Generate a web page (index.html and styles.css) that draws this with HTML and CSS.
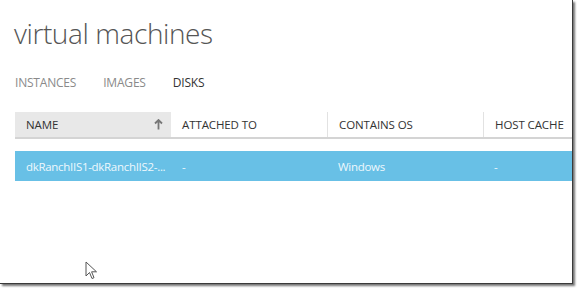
FILE: index.html
```html
<!DOCTYPE html>
<html>
<head>
<meta charset="utf-8">
<link rel="stylesheet" href="styles.css">
</head>
<body>
<div class="frame">
  <h1 class="title">virtual machines</h1>
  <nav class="tabs">
    <span class="tab">INSTANCES</span>
    <span class="tab">IMAGES</span>
    <span class="tab active">DISKS</span>
  </nav>
  <div class="grid">
    <div class="head">
      <div class="hcell sorted"><span>NAME</span>
        <svg class="arrow" width="9" height="11" viewBox="0 0 9 11"><path d="M4.5 1 L4.5 10.5 M1 4.5 L4.5 1 L8 4.5" fill="none" stroke="#777" stroke-width="1.8"/></svg>
      </div>
      <div class="hcell">ATTACHED TO</div>
      <div class="hcell">CONTAINS OS</div>
      <div class="hcell">HOST CACHE</div>
    </div>
    <div class="row selected">
      <div class="cell">dkRanchIIS1-dkRanchIIS2-...</div>
      <div class="cell">-</div>
      <div class="cell">Windows</div>
      <div class="cell">-</div>
    </div>
  </div>
  <svg class="cursor" width="13" height="19" viewBox="0 0 13 19"><path d="M1 1 L1 15 L4.5 11.5 L7 17.5 L9 16.7 L6.6 10.8 L11.5 10.8 Z" fill="#fff" stroke="#555" stroke-width="1" stroke-linejoin="round"/></svg>
</div>
</body>
</html>
```
FILE: styles.css
```css
html, body { margin: 0; padding: 0; background: #fff; }
body { width: 577px; height: 288px; overflow: hidden; }
.frame {
  position: relative;
  width: 572px;
  height: 283px;
  background: #fff;
  border-right: 1px solid #3a3a3a;
  border-bottom: 1px solid #3a3a3a;
  box-shadow: 2px 2px 2px rgba(0,0,0,0.55);
  font-family: "Open Sans", "Noto Sans", sans-serif;
  overflow: hidden;
}
.title {
  margin: 0;
  padding: 14px 0 0 14px;
  font-weight: 300;
  font-size: 28px;
  line-height: 38px;
  color: #555;
  letter-spacing: -0.4px;
}
.tabs {
  display: flex;
  gap: 27px;
  padding: 22px 0 0 15px;
  font-size: 12px;
  line-height: 17px;
  letter-spacing: -0.2px;
  color: #8a8a8a;
}
.tab.active { color: #333; }
.grid { margin: 21px 0 0 15px; }
.head {
  display: grid;
  grid-template-columns: 156px 156px 156px 1fr;
  height: 25px;
  border-bottom: 2px solid #d4d4d4;
}
.hcell {
  display: flex;
  align-items: center;
  padding-left: 11px;
  font-size: 11.5px;
  letter-spacing: -0.1px;
  color: #333;
  white-space: nowrap;
  border-left: 1px solid #e2e2e2;
}
.hcell:first-child { border-left: none; }
.hcell.sorted {
  background: #e8e8e8;
  justify-content: space-between;
  padding-right: 8px;
}
.hcell.sorted + .hcell { border-left: none; }
.arrow { display: block; }
.row {
  display: grid;
  grid-template-columns: 156px 156px 156px 1fr;
  height: 30px;
  margin-top: 12px;
}
.row.selected { background: #68c0e6; }
.cell {
  display: flex;
  align-items: center;
  padding-left: 11px;
  font-size: 11.5px;
  letter-spacing: -0.3px;
  color: #eef8fd;
  white-space: nowrap;
  overflow: hidden;
}
.cursor {
  position: absolute;
  left: 85px;
  top: 261px;
}
```
